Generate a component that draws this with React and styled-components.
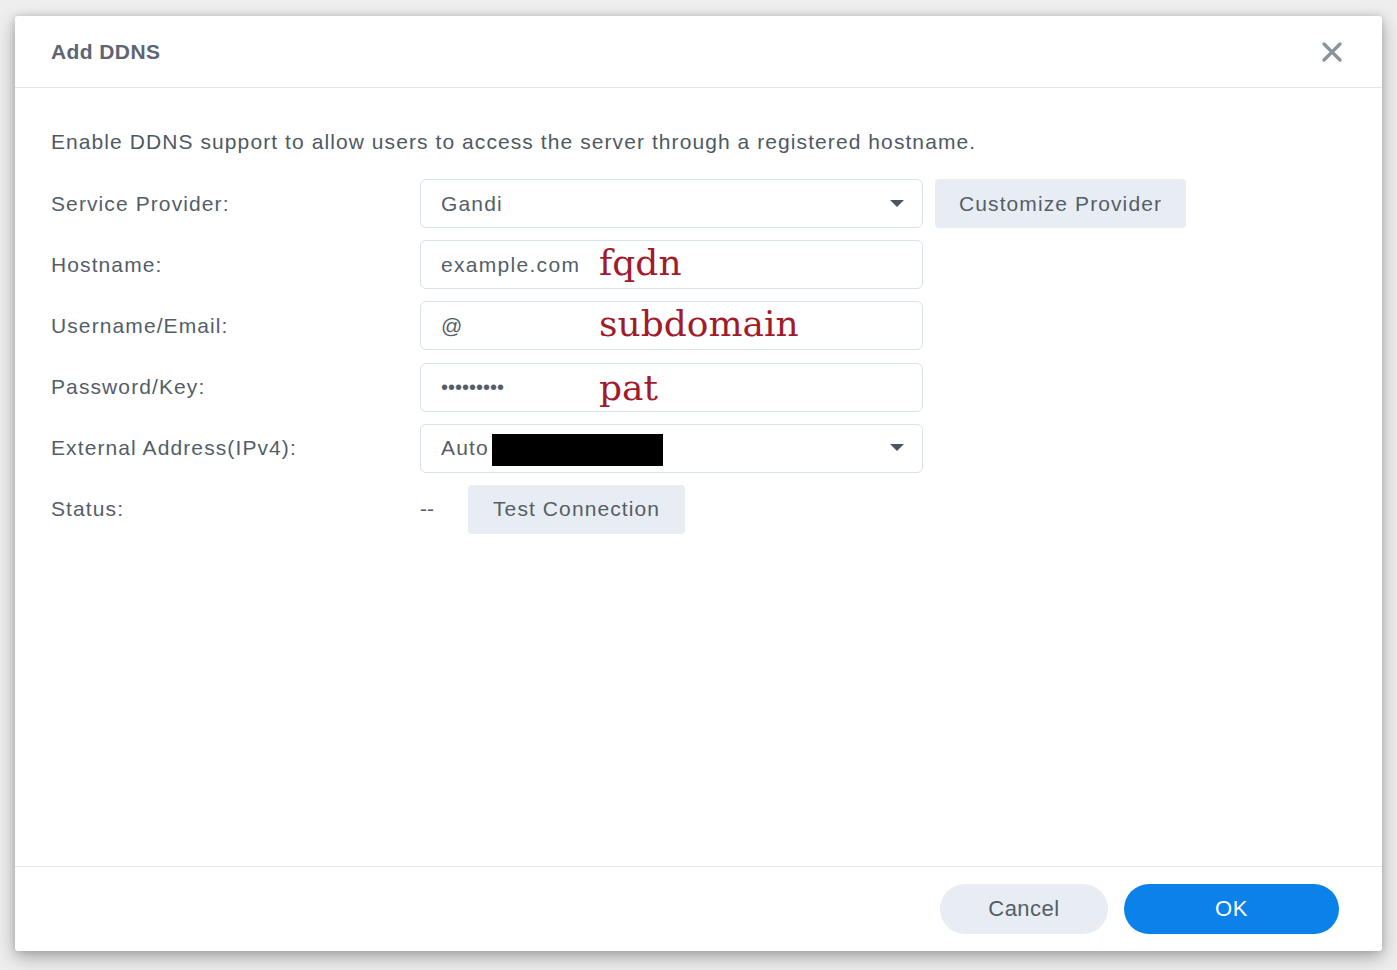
import React from "react";
import styled, { createGlobalStyle } from "styled-components";

const Global = createGlobalStyle`
  html, body { margin: 0; padding: 0; }
  body {
    background: #eeeeee;
    font-family: "Liberation Sans", Arial, sans-serif;
    overflow: hidden;
  }
`;

const Stage = styled.div`
  padding: 16px 15px;
  height: 970px;
  box-sizing: border-box;
`;

const Dialog = styled.div`
  width: 1367px;
  height: 935px;
  background: #fff;
  border-radius: 3px;
  box-shadow: 0 6px 18px rgba(0, 0, 0, 0.32), 0 0 6px rgba(0, 0, 0, 0.12);
  display: flex;
  flex-direction: column;
`;

const Header = styled.div`
  height: 72px;
  flex: none;
  box-sizing: border-box;
  padding: 0 38px 0 36px;
  border-bottom: 1.5px solid #e2e7ee;
  display: flex;
  align-items: center;
  justify-content: space-between;
`;

const Title = styled.div`
  font-size: 21px;
  font-weight: bold;
  letter-spacing: 0.4px;
  color: #5d6570;
`;

const Close = styled.button`
  border: 0;
  background: none;
  padding: 0;
  width: 24px;
  height: 24px;
  display: flex;
  align-items: center;
  justify-content: center;
  cursor: pointer;
`;

const Body = styled.div`
  flex: 1;
  padding: 42px 36px 0;
`;

const Desc = styled.p`
  margin: 0 0 25px;
  font-size: 21px;
  line-height: 24px;
  letter-spacing: 1.08px;
  color: #4f5963;
`;

const Form = styled.div`
  display: grid;
  grid-template-columns: 369px auto;
  grid-auto-rows: 49px;
  row-gap: 12.2px;
`;

const Label = styled.div`
  display: flex;
  align-items: center;
  font-size: 21px;
  letter-spacing: 1.1px;
  color: #545e68;
`;

const Field = styled.div`
  display: flex;
  align-items: center;
  gap: ${(p) => p.$gap || 12}px;
`;

const Box = styled.div`
  position: relative;
  width: 503px;
  height: 49px;
  box-sizing: border-box;
  border: 1.5px solid #d9e1ea;
  border-radius: 6px;
  display: flex;
  align-items: center;
  padding: 0 18px 0 20px;
  font-size: 21px;
  color: #555e68;
`;

const BoxText = styled.span`
  flex: 1;
  font-size: ${(p) => p.$size || 21}px;
  letter-spacing: ${(p) => (p.$ls !== undefined ? p.$ls : 1.15)}px;
`;

const Note = styled.span`
  position: absolute;
  left: 178px;
  top: ${(p) => p.$top}px;
  font-family: "DejaVu Serif", serif;
  font-size: 36px;
  color: #a21b2c;
  line-height: 1;
`;

const Redact = styled.span`
  position: absolute;
  left: 71px;
  top: 9px;
  width: 171px;
  height: 32px;
  background: #000;
`;

const Caret = styled.svg`
  flex: none;
`;

const SoftButton = styled.button`
  height: 49px;
  border: 0;
  border-radius: 4px;
  background: #e8edf3;
  color: #555e68;
  font-family: inherit;
  font-size: 21px;
  letter-spacing: 1.1px;
  padding: 0 ${(p) => p.$pad || 24}px;
  cursor: pointer;
`;

const Dash = styled.span`
  font-size: 21px;
  color: #555e68;
  width: 36px;
`;

const Footer = styled.div`
  height: 85px;
  flex: none;
  box-sizing: border-box;
  border-top: 1.5px solid #e2e7ee;
  display: flex;
  align-items: center;
  justify-content: flex-end;
  gap: 16px;
  padding: 0 43px 0 0;
`;

const Pill = styled.button`
  height: 50px;
  width: ${(p) => p.$w}px;
  border: 0;
  border-radius: 25px;
  font-family: inherit;
  font-size: 22px;
  letter-spacing: 0.5px;
  background: ${(p) => (p.$primary ? "#0a82ea" : "#e8edf3")};
  color: ${(p) => (p.$primary ? "#ffffff" : "#555e68")};
  cursor: pointer;
`;

const DropCaret = () => (
  <Caret width="14" height="8" viewBox="0 0 14 8">
    <path d="M0 0 L14 0 L7 7 Z" fill="#4a5560" />
  </Caret>
);

export default function App() {
  return (
    <>
      <Global />
      <Stage>
        <Dialog>
          <Header>
            <Title>Add DDNS</Title>
            <Close aria-label="Close">
              <svg width="20" height="20" viewBox="0 0 20 20">
                <path d="M2 2 L18 18 M18 2 L2 18" stroke="#8a929c" strokeWidth="3.2" strokeLinecap="round" />
              </svg>
            </Close>
          </Header>
          <Body>
            <Desc>Enable DDNS support to allow users to access the server through a registered hostname.</Desc>
            <Form>
              <Label>Service Provider:</Label>
              <Field>
                <Box>
                  <BoxText>Gandi</BoxText>
                  <DropCaret />
                </Box>
                <SoftButton $pad={24}>Customize Provider</SoftButton>
              </Field>

              <Label>Hostname:</Label>
              <Field>
                <Box>
                  <BoxText $ls={1.3}>example.com</BoxText>
                  <Note $top={4}>fqdn</Note>
                </Box>
              </Field>

              <Label>Username/Email:</Label>
              <Field>
                <Box>
                  <BoxText>@</BoxText>
                  <Note $top={4}>subdomain</Note>
                </Box>
              </Field>

              <Label>Password/Key:</Label>
              <Field>
                <Box>
                  <BoxText $size={20} $ls={0}>•••••••••</BoxText>
                  <Note $top={6}>pat</Note>
                </Box>
              </Field>

              <Label>External Address(IPv4):</Label>
              <Field>
                <Box>
                  <BoxText>Auto</BoxText>
                  <Redact />
                  <DropCaret />
                </Box>
              </Field>

              <Label>Status:</Label>
              <Field $gap={12}>
                <Dash>--</Dash>
                <SoftButton $pad={25}>Test Connection</SoftButton>
              </Field>
            </Form>
          </Body>
          <Footer>
            <Pill $w={168}>Cancel</Pill>
            <Pill $w={215} $primary>OK</Pill>
          </Footer>
        </Dialog>
      </Stage>
    </>
  );
}
